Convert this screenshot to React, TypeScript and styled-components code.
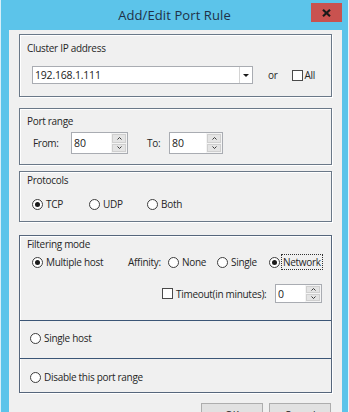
import React from "react";
import styled, { createGlobalStyle } from "styled-components";

const FONT = `"Open Sans", "Noto Sans", sans-serif`;

const Global = createGlobalStyle`
  html, body { margin: 0; padding: 0; background: #ffffff; }
  body { overflow: hidden; }
  * { box-sizing: border-box; }
`;

const Window = styled.div`
  width: 349px;
  height: 412px;
  overflow: hidden;
  background: #5cc4ea;
  border-left: 1px solid #d6eff9;
  border-right: 1px solid #e6f6fc;
  display: flex;
  flex-direction: column;
  font-family: ${FONT};
  color: #1e1e1e;
`;

const TitleBar = styled.div`
  height: 30px;
  flex: none;
  display: grid;
  grid-template-columns: 1fr auto 1fr;
  align-items: start;
`;

const Title = styled.div`
  grid-column: 2;
  font-size: 13px;
  line-height: 31px;
  color: #1f3147;
  letter-spacing: 0.1px;
`;

const CloseButton = styled.div`
  grid-column: 3;
  justify-self: end;
  margin-top: 3px;
  margin-right: 6px;
  width: 31px;
  height: 19px;
  background: #c9524f;
  display: flex;
  align-items: center;
  justify-content: center;
`;

const Client = styled.div`
  flex: 1;
  margin: 0 6px 0 8px;
  background: #f0f0f0;
  padding: 4px 10px 0 10px;
  display: flex;
  flex-direction: column;
`;

const Group = styled.div<{ $mt: number; $h?: number; $tone?: string }>`
  margin-top: ${(p) => p.$mt}px;
  ${(p) => (p.$h ? `height: ${p.$h}px;` : "")}
  border: 1px solid ${(p) => p.$tone || "#6a7888"};
  box-shadow: inset 1px 1px 0 #ffffff, 1px 1px 0 #ffffff;
  display: flex;
  flex-direction: column;
  flex: none;
`;

const GroupLabel = styled.div<{ $mt: number }>`
  margin: ${(p) => p.$mt}px 0 0 7px;
  font-size: 10px;
  line-height: 14px;
  letter-spacing: -0.3px;
  color: #262626;
`;

const Row = styled.div<{ $mt: number; $pl: number; $h?: number }>`
  margin-top: ${(p) => p.$mt}px;
  padding-left: ${(p) => p.$pl}px;
  height: ${(p) => p.$h || 14}px;
  display: flex;
  align-items: center;
`;

const Text = styled.span<{ $w?: number; $ml?: number }>`
  font-size: 10px;
  line-height: 14px;
  letter-spacing: -0.3px;
  color: #262626;
  white-space: nowrap;
  ${(p) => (p.$w ? `width: ${p.$w}px; flex: none;` : "")}
  ${(p) => (p.$ml ? `margin-left: ${p.$ml}px;` : "")}
`;

const Focus = styled.span`
  outline: 1px dotted #333;
  outline-offset: 0;
  padding: 0 1px;
  margin-left: -1px;
`;

const Combo = styled.div`
  width: 221px;
  height: 18px;
  border: 1px solid #a9acb2;
  background: #ffffff;
  display: flex;
  flex: none;
`;

const ComboValue = styled.div`
  flex: 1;
  padding-left: 2px;
  font-size: 10.5px;
  line-height: 16px;
  letter-spacing: -0.2px;
  color: #1a1a1a;
`;

const ComboArrow = styled.div`
  width: 13px;
  border-left: 1px solid #d4d4d4;
  display: flex;
  align-items: center;
  justify-content: center;
  &::after {
    content: "";
    border-left: 3px solid transparent;
    border-right: 3px solid transparent;
    border-top: 3px solid #1a1a1a;
  }
`;

const CheckBox = styled.span<{ $ml?: number }>`
  width: 11px;
  height: 11px;
  flex: none;
  border: 1px solid #4a4a4a;
  background: #ffffff;
  margin-left: ${(p) => p.$ml || 0}px;
`;

const Spin = styled.div<{ $w: number; $h: number }>`
  width: ${(p) => p.$w}px;
  height: ${(p) => p.$h}px;
  border: 1px solid #a9acb2;
  background: #ffffff;
  display: flex;
  flex: none;
`;

const SpinValue = styled.div`
  flex: 1;
  padding-left: 2px;
  font-size: 10.5px;
  display: flex;
  align-items: center;
  color: #1a1a1a;
`;

const SpinButtons = styled.div`
  width: 16px;
  display: flex;
  flex-direction: column;
  gap: 1px;
  padding: 1px;
  background: #f4f4f4;
`;

const SpinButton = styled.div`
  flex: 1;
  background: #e4e4e4;
  border: 1px solid #cfcfcf;
  display: flex;
  align-items: center;
  justify-content: center;
`;

const RadioItem = styled.label<{ $w?: number }>`
  display: flex;
  align-items: center;
  gap: 3px;
  ${(p) => (p.$w ? `width: ${p.$w}px; flex: none;` : "")}
`;

const RadioCircle = styled.span<{ $on?: boolean }>`
  width: 11px;
  height: 11px;
  flex: none;
  border-radius: 50%;
  border: 1px solid #3e3e3e;
  background: #ffffff;
  display: flex;
  align-items: center;
  justify-content: center;
  &::after {
    content: "";
    width: 5px;
    height: 5px;
    border-radius: 50%;
    background: ${(p) => (p.$on ? "#1a1a1a" : "transparent")};
  }
`;

const Section = styled.div<{ $h: number; $divider?: boolean; $pt?: number }>`
  height: ${(p) => p.$h}px;
  flex: none;
  display: flex;
  flex-direction: column;
  ${(p) => (p.$divider ? "border-top: 1px solid #3b5576;" : "")}
  ${(p) => (p.$pt !== undefined ? `padding-top: ${p.$pt}px;` : "")}
`;

const ButtonRow = styled.div`
  margin-top: 10px;
  display: flex;
  justify-content: flex-end;
  gap: 6px;
  padding-right: 1px;
`;

const Button = styled.div`
  width: 62px;
  height: 23px;
  flex: none;
  border: 1px solid #adadad;
  background: #e1e1e1;
  font-size: 10px;
  display: flex;
  align-items: center;
  justify-content: center;
  color: #1a1a1a;
`;

const Chevron = ({ up }: { up?: boolean }) => (
  <svg width="5" height="3" viewBox="0 0 5 3">
    <polyline
      points={up ? "0.5,2.5 2.5,0.5 4.5,2.5" : "0.5,0.5 2.5,2.5 4.5,0.5"}
      fill="none"
      stroke="#3a3a3a"
      strokeWidth="1"
    />
  </svg>
);

const SpinBox = ({ value, w, h }: { value: string; w: number; h: number }) => (
  <Spin $w={w} $h={h}>
    <SpinValue>{value}</SpinValue>
    <SpinButtons>
      <SpinButton>
        <Chevron up />
      </SpinButton>
      <SpinButton>
        <Chevron />
      </SpinButton>
    </SpinButtons>
  </Spin>
);

const Radio = ({ label, on, w }: { label: React.ReactNode; on?: boolean; w?: number }) => (
  <RadioItem $w={w}>
    <RadioCircle $on={on} />
    <Text>{label}</Text>
  </RadioItem>
);

export default function App() {
  return (
    <>
      <Global />
      <Window>
        <TitleBar>
          <Title>Add/Edit Port Rule</Title>
          <CloseButton>
            <svg width="9" height="8" viewBox="0 0 9 8">
              <path d="M1 0.8 L8 7.2 M8 0.8 L1 7.2" stroke="#1a1a1a" strokeWidth="2.2" />
            </svg>
          </CloseButton>
        </TitleBar>
        <Client>
          <Group $mt={0} $h={63}>
            <GroupLabel $mt={6}>Cluster IP address</GroupLabel>
            <Row $mt={11} $pl={12} $h={18}>
              <Combo>
                <ComboValue>192.168.1.111</ComboValue>
                <ComboArrow />
              </Combo>
              <Text $ml={15}>or</Text>
              <CheckBox $ml={14} />
              <Text $ml={2}>All</Text>
            </Row>
          </Group>

          <Group $mt={11} $h={57}>
            <GroupLabel $mt={5}>Port range</GroupLabel>
            <Row $mt={4} $pl={13} $h={22}>
              <Text $w={38}>From:</Text>
              <SpinBox value="80" w={57} h={22} />
              <Text $w={22} $ml={19}>To:</Text>
              <SpinBox value="80" w={54} h={22} />
            </Row>
          </Group>

          <Group $mt={6} $h={51}>
            <GroupLabel $mt={1}>Protocols</GroupLabel>
            <Row $mt={10} $pl={12}>
              <Radio label="TCP" on w={57} />
              <Radio label="UDP" w={58} />
              <Radio label="Both" />
            </Row>
          </Group>

          <Group $mt={13} $tone="#56667c">
            <Section $h={84}>
              <GroupLabel $mt={1}>Filtering mode</GroupLabel>
              <Row $mt={4} $pl={12}>
                <Radio label="Multiple host" on w={96} />
                <Text $w={40}>Affinity:</Text>
                <Radio label="None" w={49} />
                <Radio label="Single" w={52} />
                <Radio label={<Focus>Network</Focus>} on />
              </Row>
              <Row $mt={15} $pl={142} $h={19}>
                <CheckBox />
                <Text $w={99} $ml={3}>Timeout(in minutes):</Text>
                <SpinBox value="0" w={47} h={19} />
              </Row>
            </Section>
            <Section $h={38} $divider $pt={10}>
              <Row $mt={0} $pl={10}>
                <Radio label="Single host" />
              </Row>
            </Section>
            <Section $h={34} $divider $pt={11}>
              <Row $mt={0} $pl={10}>
                <Radio label="Disable this port range" />
              </Row>
            </Section>
          </Group>

          <ButtonRow>
            <Button>OK</Button>
            <Button>Cancel</Button>
          </ButtonRow>
        </Client>
      </Window>
    </>
  );
}
